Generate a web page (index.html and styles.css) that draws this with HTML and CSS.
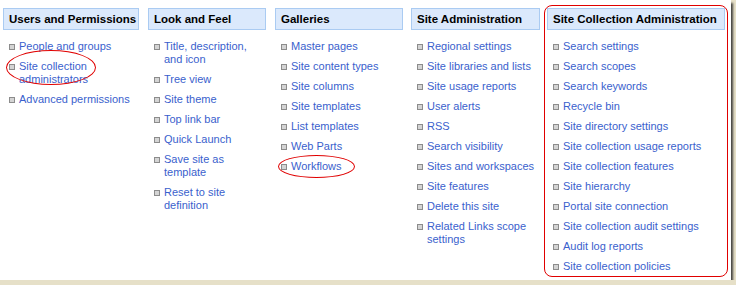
FILE: index.html
```html
<!DOCTYPE html>
<html lang="en">
<head>
    <meta charset="utf-8"/>
    <title>Site Settings</title>
    <link rel="stylesheet" href="styles.css">
</head>
<body>
    <div class="page">
        <div class="settings">
            <div class="group group-users">
                <h3>Users and Permissions</h3>
                <ul>
                    <li><a href="#">People and groups</a></li>
                    <li class="circled circled-admins"><a href="#">Site collection administrators</a></li>
                    <li><a href="#">Advanced permissions</a></li>
                </ul>
            </div>

            <div class="group group-look">
                <h3>Look and Feel</h3>
                <ul>
                    <li><a href="#">Title, description, and icon</a></li>
                    <li><a href="#">Tree view</a></li>
                    <li><a href="#">Site theme</a></li>
                    <li><a href="#">Top link bar</a></li>
                    <li><a href="#">Quick Launch</a></li>
                    <li><a href="#">Save site as template</a></li>
                    <li><a href="#">Reset to site definition</a></li>
                </ul>
            </div>

            <div class="group group-galleries">
                <h3>Galleries</h3>
                <ul>
                    <li><a href="#">Master pages</a></li>
                    <li><a href="#">Site content types</a></li>
                    <li><a href="#">Site columns</a></li>
                    <li><a href="#">Site templates</a></li>
                    <li><a href="#">List templates</a></li>
                    <li><a href="#">Web Parts</a></li>
                    <li class="circled circled-workflows"><a href="#">Workflows</a></li>
                </ul>
            </div>

            <div class="group group-admin">
                <h3>Site Administration</h3>
                <ul>
                    <li><a href="#">Regional settings</a></li>
                    <li><a href="#">Site libraries and lists</a></li>
                    <li><a href="#">Site usage reports</a></li>
                    <li><a href="#">User alerts</a></li>
                    <li><a href="#">RSS</a></li>
                    <li><a href="#">Search visibility</a></li>
                    <li><a href="#">Sites and workspaces</a></li>
                    <li><a href="#">Site features</a></li>
                    <li><a href="#">Delete this site</a></li>
                    <li><a href="#">Related Links scope settings</a></li>
                </ul>
            </div>

            <div class="group group-collection">
                <h3>Site Collection Administration</h3>
                <ul>
                    <li><a href="#">Search settings</a></li>
                    <li><a href="#">Search scopes</a></li>
                    <li><a href="#">Search keywords</a></li>
                    <li><a href="#">Recycle bin</a></li>
                    <li><a href="#">Site directory settings</a></li>
                    <li><a href="#">Site collection usage reports</a></li>
                    <li><a href="#">Site collection features</a></li>
                    <li><a href="#">Site hierarchy</a></li>
                    <li><a href="#">Portal site connection</a></li>
                    <li><a href="#">Site collection audit settings</a></li>
                    <li><a href="#">Audit log reports</a></li>
                    <li><a href="#">Site collection policies</a></li>
                </ul>
            </div>
        </div>
    </div>
</body>
</html>
```

FILE: styles.css
```css
body {
    margin: 0;
    background-color: #e6e0c8;
    font-family: Tahoma, 'Liberation Sans', Arial, sans-serif;
    font-size: 11px;
}

.page {
    width: 731px;
    height: 280px;
    background-color: #ffffff;
    box-shadow: 2px 3px 2px rgba(40, 40, 40, 0.85);
}

.settings {
    display: flex;
    align-items: flex-start;
    padding: 5px 0 0 3px;
}

.group h3 {
    margin: 0;
    height: 20px;
    line-height: 20px;
    padding: 0 5px;
    font-size: 11.5px;
    font-weight: bold;
    color: #000000;
    background-color: #dbe9fc;
    border: 1px solid #aacbf2;
    white-space: nowrap;
}

.group-users { width: 136px; margin-top: 3px; margin-right: 9px; }
.group-look { width: 118px; margin-top: 3px; margin-right: 9px; }
.group-galleries { width: 128px; margin-top: 3px; margin-right: 8px; }
.group-admin { width: 129px; margin-top: 3px; margin-right: 4px; }

/* red callout box around the last column */
.group-collection {
    width: 178px;
    height: 266px;
    padding: 2px;
    border: 1px solid #e00000;
    border-radius: 8px;
}

.group ul {
    list-style: none;
    margin: 10px 0 0 0;
    padding: 0 0 0 16px;
}

.group li {
    position: relative;
    line-height: 13px;
    margin-bottom: 7px;
}

.group li::before {
    content: "";
    position: absolute;
    left: -10px;
    top: 4px;
    width: 4px;
    height: 4px;
    border: 1px solid #8c8c8c;
    background-color: #d4d4d4;
}

.group a {
    color: #3a5fcd;
    text-decoration: none;
}

.group-look li {
    padding-right: 6px;
}

/* red ellipses drawn over the links */
.circled::after {
    content: "";
    position: absolute;
    border: 1px solid #e00000;
    border-radius: 50%;
}

.circled-admins::after {
    left: -13px;
    top: -10px;
    width: 88px;
    height: 33px;
}

.circled-workflows::after {
    left: -13px;
    top: -5px;
    width: 75px;
    height: 21px;
}
```
